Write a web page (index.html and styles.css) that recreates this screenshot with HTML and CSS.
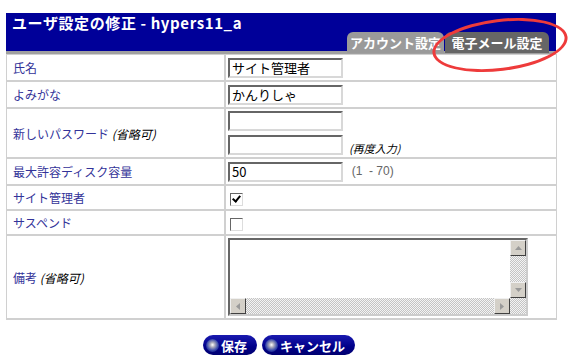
FILE: index.html
```html
<!DOCTYPE html>
<html lang="ja">

<head>
    <meta charset="UTF-8">
    <title>ユーザ設定の修正</title>
    <link rel="stylesheet" href="styles.css">
</head>

<body>
    <div class="panel">
        <div class="header">
            <h1>ユーザ設定の修正 - hypers11_a</h1>
            <div class="tabs">
                <span class="tab">アカウント設定</span>
                <span class="tab active">電子メール設定</span>
            </div>
        </div>
        <table class="form">
            <tr>
                <th>氏名</th>
                <td><input type="text" value="サイト管理者"></td>
            </tr>
            <tr>
                <th>よみがな</th>
                <td><input type="text" value="かんりしゃ"></td>
            </tr>
            <tr class="pw">
                <th>新しいパスワード <em>(省略可)</em></th>
                <td>
                    <div class="pw-lines">
                        <input type="password">
                        <div class="pw-again">
                            <input type="password">
                            <em class="note">(再度入力)</em>
                        </div>
                    </div>
                </td>
            </tr>
            <tr>
                <th>最大許容ディスク容量</th>
                <td><input type="text" value="50"> <span class="range">(1 &nbsp;- 70)</span></td>
            </tr>
            <tr class="cb">
                <th>サイト管理者</th>
                <td><span class="check on"></span></td>
            </tr>
            <tr class="cb">
                <th>サスペンド</th>
                <td><span class="check"></span></td>
            </tr>
            <tr class="memo">
                <th>備考 <em>(省略可)</em></th>
                <td>
                    <div class="memo-box">
                        <textarea></textarea>
                        <div class="vbar">
                            <span class="sbtn"><svg width="7" height="4" viewBox="0 0 7 4"><path d="M0 4L3.5 0L7 4z" fill="#999"/></svg></span>
                            <span class="track"></span>
                            <span class="sbtn"><svg width="7" height="4" viewBox="0 0 7 4"><path d="M0 0L3.5 4L7 0z" fill="#999"/></svg></span>
                        </div>
                        <div class="hbar">
                            <span class="sbtn"><svg width="4" height="7" viewBox="0 0 4 7"><path d="M4 0L0 3.5L4 7z" fill="#999"/></svg></span>
                            <span class="track"></span>
                            <span class="sbtn"><svg width="4" height="7" viewBox="0 0 4 7"><path d="M0 0L4 3.5L0 7z" fill="#999"/></svg></span>
                        </div>
                        <span class="track corner"></span>
                    </div>
                </td>
            </tr>
        </table>
        <div class="buttons">
            <button type="submit"><span class="ball"></span>保存</button>
            <button type="button"><span class="ball"></span>キャンセル</button>
        </div>
    </div>
    <div class="marker"></div>
</body>

</html>
```

FILE: styles.css
```css
body {
    margin: 0;
    padding: 13px 0 0 6px;
    font-family: "Noto Sans CJK JP", "Liberation Sans", sans-serif;
    font-size: 12px;
    background-color: #fff;
}

.panel {
    width: 550px;
}

.header {
    background-color: #000099;
    border-bottom: 3px solid #a0a0a0;
    height: 38px;
    display: flex;
    flex-direction: column;
    justify-content: space-between;
}

h1 {
    margin: 0;
    padding: 1px 0 0 6px;
    font-size: 15px;
    line-height: 18px;
    color: #fff;
    font-weight: bold;
    letter-spacing: 0.6px;
}

.tabs {
    display: flex;
    justify-content: flex-end;
    gap: 1px;
    padding-right: 7px;
}

.tab {
    display: block;
    width: 97px;
    height: 21px;
    line-height: 21px;
    text-align: center;
    font-size: 13px;
    font-weight: bold;
    color: #fff;
    background-color: #9a9a9a;
    border-radius: 6px 6px 0 0;
    overflow: hidden;
    white-space: nowrap;
}

.tab.active {
    width: 104px;
    background-color: #666;
}

.form {
    width: 551px;
    border-collapse: collapse;
}

.form th,
.form td {
    border: 2px solid #d0d0d0;
    height: 23px;
    padding: 1px 2px;
    text-align: left;
    vertical-align: middle;
}

.form th {
    width: 209px;
    font-weight: normal;
    color: #333399;
    padding-left: 6px;
}

.form tr:first-child th,
.form tr:first-child td {
    border-top-width: 1px;
}

.form th:first-child {
    border-left-width: 1px;
}

.form td {
    border-right-width: 1px;
    line-height: 16px;
}

.form .cb th,
.form .cb td {
    height: 21px;
}

em {
    color: #000;
    font-style: italic;
}

input[type="text"],
input[type="password"] {
    width: 115px;
    height: 20px;
    box-sizing: border-box;
    margin: 0;
    padding: 0 2px;
    border: 2px solid;
    border-color: #666 #d8d8d8 #d8d8d8 #666;
    font-family: inherit;
    font-size: 13px;
    vertical-align: middle;
}

.pw-lines {
    display: flex;
    flex-direction: column;
    gap: 4px;
    padding: 1px 0;
}

.pw-again {
    display: flex;
    align-items: flex-end;
    gap: 6px;
}

.note {
    font-size: 11px;
    line-height: 14px;
}

.range {
    font-family: "Liberation Sans", sans-serif;
    font-size: 12px;
    color: #666;
    margin-left: 6px;
}

.check {
    display: inline-block;
    width: 11px;
    height: 11px;
    margin-left: 2px;
    border: 1px solid;
    border-color: #666 #ddd #ddd #666;
    vertical-align: middle;
    position: relative;
}

.check.on::after {
    content: "";
    position: absolute;
    left: 3px;
    top: 0px;
    width: 3px;
    height: 6px;
    border: solid #000;
    border-width: 0 2px 2px 0;
    transform: rotate(40deg);
}

.memo th,
.memo td {
    height: 80px;
}

.memo-box {
    width: 300px;
    height: 78px;
    box-sizing: border-box;
    border: 2px solid;
    border-color: #666 #ccc #ccc #666;
    display: grid;
    grid-template-columns: 1fr 16px;
    grid-template-rows: 1fr 16px;
}

textarea {
    border: none;
    margin: 0;
    padding: 0;
    resize: none;
    outline: none;
    overflow: hidden;
}

.vbar,
.hbar {
    display: flex;
}

.vbar {
    flex-direction: column;
}

.track {
    flex: 1;
    background: repeating-conic-gradient(#c4c4c4 0 25%, #f4f4f4 0 50%) 0 0 / 2px 2px;
}

.sbtn {
    width: 16px;
    height: 16px;
    box-sizing: border-box;
    border: 1px solid;
    border-color: #f0f0f0 #404040 #404040 #f0f0f0;
    background-color: #d4d0c8;
    display: flex;
    align-items: center;
    justify-content: center;
}

.buttons {
    display: flex;
    justify-content: center;
    gap: 5px;
    margin-top: 15px;
    padding-right: 4px;
}

button {
    display: flex;
    align-items: center;
    gap: 2px;
    height: 20px;
    padding: 0 10px 0 3px;
    border: none;
    border-radius: 10px;
    background: linear-gradient(#1a1ab0, #000088 60%, #000070);
    color: #fff;
    font-family: inherit;
    font-size: 13px;
    font-weight: bold;
    cursor: pointer;
}

.ball {
    width: 13px;
    height: 13px;
    border-radius: 50%;
    background: radial-gradient(circle at 50% 45%, #fff 0, #aab 25%, #3344aa 60%, #000066 100%);
}

.marker {
    position: absolute;
    left: 432px;
    top: 19px;
    width: 136px;
    height: 52px;
    border: 3px solid #ee3b3b;
    border-radius: 50%;
    transform: rotate(-7deg);
    box-sizing: border-box;
}
```
